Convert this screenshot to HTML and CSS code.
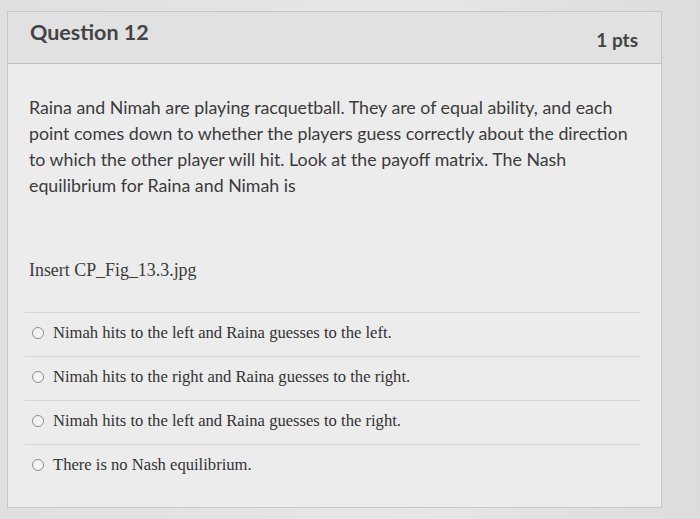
FILE: index.html
```html
<!DOCTYPE html>
<html>
<head>
<meta charset="utf-8">
<link rel="stylesheet" href="styles.css">
</head>
<body>
<div class="card">
  <div class="header">
    <h2 class="title">Question 12</h2>
    <span class="pts">1 pts</span>
  </div>
  <div class="body">
    <p class="question">Raina and Nimah are playing racquetball. They are of equal ability, and each point comes down to whether the players guess correctly about the direction to which the other player will hit. Look at the payoff matrix. The Nash equilibrium for Raina and Nimah is</p>
    <p class="insert">Insert CP_Fig_13.3.jpg</p>
    <ul class="answers">
      <li class="answer"><span class="radio"></span>Nimah hits to the left and Raina guesses to the left.</li>
      <li class="answer"><span class="radio"></span>Nimah hits to the right and Raina guesses to the right.</li>
      <li class="answer"><span class="radio"></span>Nimah hits to the left and Raina guesses to the right.</li>
      <li class="answer"><span class="radio"></span>There is no Nash equilibrium.</li>
    </ul>
  </div>
</div>
</body>
</html>
```
FILE: styles.css
```css
html, body {
  margin: 0;
  padding: 0;
}
body {
  background: linear-gradient(90deg, #e0e0e0 0%, #e6e6e6 60%, #dcdcdc 100%);
  width: 700px;
  height: 519px;
  overflow: hidden;
  font-family: Lato, "Liberation Sans", sans-serif;
  color: #3b3b3b;
}
.card {
  margin: 11px 0 0 7px;
  width: 655px;
  height: 497px;
  border: 1px solid #c6c6c6;
  background: #ececec;
  box-sizing: border-box;
}
.header {
  height: 52px;
  background: #e1e1e1;
  border-bottom: 1px solid #c0c0c0;
  display: flex;
  align-items: flex-start;
  justify-content: space-between;
  padding: 7px 23px 0 22px;
  box-sizing: border-box;
}
.title {
  margin: 0;
  font-size: 21.5px;
  line-height: 26px;
  font-weight: 700;
  color: #444;
}
.pts {
  font-size: 19px;
  line-height: 26px;
  font-weight: 700;
  color: #444;
  margin-top: 8px;
}
.body {
  padding: 30px 16px 0 17px;
}
.question {
  margin: 0 0 0 4px;
  font-size: 17.8px;
  line-height: 26px;
  width: 608px;
}
.insert {
  margin: 61px 0 0 4px;
  font-family: "Liberation Serif", serif;
  font-size: 17.9px;
  line-height: 22px;
}
.answers {
  list-style: none;
  margin: 31px 0 0 0;
  padding: 0;
  width: 616px;
}
.answer {
  border-top: 1px solid #d6d6d6;
  height: 44px;
  display: flex;
  align-items: center;
  padding-bottom: 4px;
  box-sizing: border-box;
  font-family: "Liberation Serif", serif;
  font-size: 16.6px;
  color: #333;
}
.radio {
  width: 10px;
  height: 10px;
  border: 1.5px solid #8e8e8e;
  border-radius: 50%;
  background: #f4f4f4;
  margin: 0 9px 0 7px;
  flex: none;
}
```
